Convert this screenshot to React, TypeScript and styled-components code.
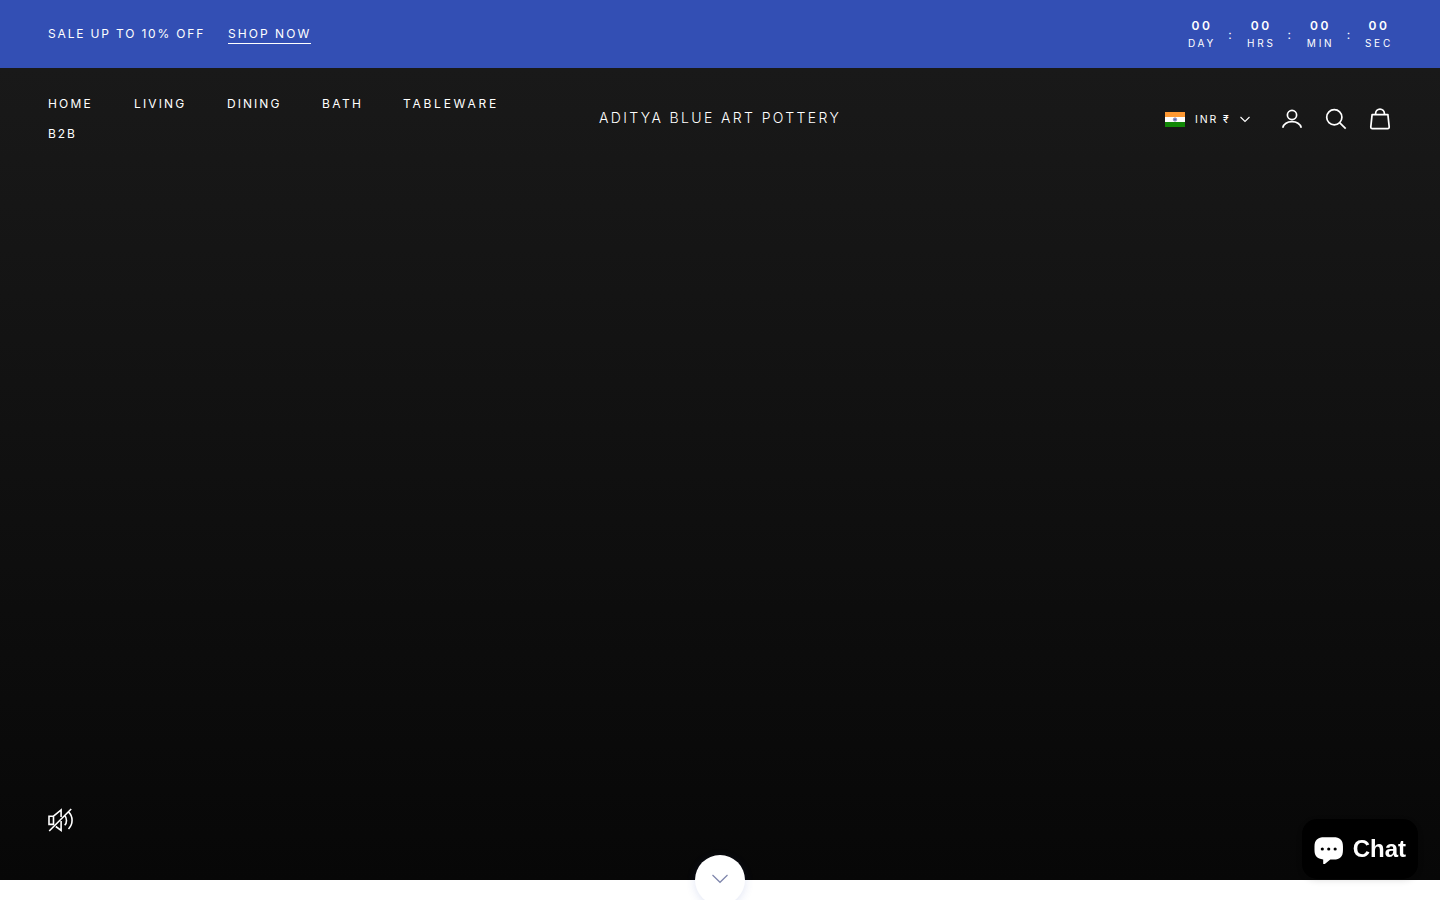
import React from "react";
import styled, { createGlobalStyle } from "styled-components";

const GlobalStyle = createGlobalStyle`
  *, *::before, *::after { box-sizing: border-box; }
  html, body { margin: 0; height: 100%; overflow: hidden; background: #fff; }
  body { font-family: Inter, "Liberation Sans", sans-serif; color: #fff; }
  a { color: inherit; text-decoration: none; }
  svg { display: block; }
`;

const Page = styled.div`
  height: 900px;
  overflow: hidden;
  display: flex;
  flex-direction: column;
`;

const AnnouncementBar = styled.aside`
  flex: none;
  height: 68px;
  padding: 0 48px;
  display: flex;
  align-items: center;
  justify-content: space-between;
  background: #334fb4;
`;

const Offer = styled.div`
  display: flex;
  gap: 24px;
  font-size: 12px;
  font-weight: 380;
  line-height: 20px;
  white-space: nowrap;
`;

const OfferText = styled.span`
  width: 156px;
  letter-spacing: 1.83px;
`;

const OfferLink = styled.a`
  width: 83px;
  height: 20px;
  letter-spacing: 2.05px;
  border-bottom: 1px solid #fff;
`;

const Countdown = styled.div`
  display: flex;
  align-items: center;
  width: 205px;
  justify-content: space-between;
`;

const Unit = styled.div<{ $width: number }>`
  width: ${(p) => p.$width}px;
  display: flex;
  flex-direction: column;
  align-items: center;
  padding-top: 1px;
  white-space: nowrap;
`;

const UnitValue = styled.span`
  font-size: 12px;
  line-height: 18px;
  font-weight: 600;
  letter-spacing: 2.6px;
  margin-right: -1px;
`;

const UnitLabel = styled.span`
  font-size: 10px;
  font-weight: 380;
  line-height: 17px;
  letter-spacing: 2.8px;
  margin-right: -1px;
`;

const Colon = styled.span`
  width: 6px;
  font-size: 12px;
  line-height: 18px;
  padding-top: 1px;
`;

const Hero = styled.main`
  position: relative;
  flex: none;
  height: 812px;
  display: flex;
  flex-direction: column;
  justify-content: space-between;
  background: linear-gradient(#191919, #070707);
`;

const Header = styled.header`
  height: 102px;
  padding: 0 48px;
  display: grid;
  grid-template-columns: 1fr 242px 1fr;
  align-items: center;
`;

const Nav = styled.nav`
  width: 480px;
  display: flex;
  flex-wrap: wrap;
  row-gap: 12px;
  padding-bottom: 1px;
`;

const NavLink = styled.a<{ $width: number; $spacing: number }>`
  width: ${(p) => p.$width}px;
  font-size: 12px;
  font-weight: 370;
  line-height: 18px;
  letter-spacing: ${(p) => p.$spacing}px;
  white-space: nowrap;
`;

const Brand = styled.a`
  font-size: 14px;
  font-weight: 360;
  line-height: 20px;
  letter-spacing: 2.37px;
  white-space: nowrap;
  padding-bottom: 2px;
`;

const Tools = styled.div`
  display: flex;
  justify-content: flex-end;
  align-items: center;
`;

const Currency = styled.button`
  width: 85px;
  margin-right: 30px;
  padding: 0;
  border: 0;
  display: flex;
  align-items: center;
  background: none;
  color: inherit;
  font: 400 10.5px/16px Inter, "Liberation Sans", sans-serif;
  letter-spacing: 1.9px;
  white-space: nowrap;
`;

const CurrencyText = styled.span`
  width: 55px;
  padding: 1px 0 0 10px;
  text-align: left;
`;

const IconRow = styled.div`
  display: flex;
  gap: 20px;
`;

const IconButton = styled.button`
  width: 24px;
  height: 24px;
  padding: 0;
  border: 0;
  background: none;
  color: inherit;
`;

const SoundButton = styled(IconButton)`
  width: 26px;
  height: 26px;
  margin: 0 0 47px 48px;
`;

const ScrollButton = styled.button`
  position: absolute;
  left: 50%;
  bottom: -25px;
  width: 50px;
  height: 50px;
  margin-left: -25px;
  padding: 0 0 2px;
  border: 0;
  border-radius: 50%;
  display: grid;
  place-items: center;
  background: #fff;
  box-shadow: 0 2px 10px rgba(51, 79, 180, 0.15);
`;

const ChatButton = styled.button`
  position: fixed;
  right: 22px;
  bottom: 21px;
  width: 116px;
  height: 60px;
  padding: 0 12px;
  border: 0;
  border-radius: 15px;
  display: flex;
  align-items: center;
  gap: 9px;
  background: #000;
  color: #fff;
  font: 700 24px/28px "Liberation Sans", sans-serif;
  box-shadow: 0 2px 6px rgba(0, 0, 0, 0.1);
`;

const links = [
  { label: "HOME", width: 86, spacing: 2.15 },
  { label: "LIVING", width: 93, spacing: 2.15 },
  { label: "DINING", width: 95, spacing: 2.05 },
  { label: "BATH", width: 81, spacing: 2.4 },
  { label: "TABLEWARE", width: 96, spacing: 2.75 },
  { label: "B2B", width: 40, spacing: 1.9 },
];

const units = [
  { label: "DAY", width: 29 },
  { label: "HRS", width: 29 },
  { label: "MIN", width: 29 },
  { label: "SEC", width: 27 },
];

const Flag = () => (
  <svg width="20" height="15" viewBox="0 0 20 15">
    <path fill="#fff" d="M0 0h20v15H0z" />
    <path fill="#f93" d="M0 0h20v5H0z" />
    <path fill="#128807" d="M0 10h20v5H0z" />
    <circle cx="10" cy="7.5" r="1.7" fill="#9ca0cc" stroke="#4b4f93" strokeWidth=".5" />
    <circle cx="10" cy="7.5" r=".5" fill="#008" />
  </svg>
);

export default function App() {
  return (
    <Page>
      <GlobalStyle />
      <AnnouncementBar>
        <Offer>
          <OfferText>SALE UP TO 10% OFF</OfferText>
          <OfferLink href="#">SHOP NOW</OfferLink>
        </Offer>
        <Countdown>
          {units.map((unit, i) => (
            <React.Fragment key={unit.label}>
              {i > 0 && <Colon>:</Colon>}
              <Unit $width={unit.width}>
                <UnitValue>00</UnitValue>
                <UnitLabel>{unit.label}</UnitLabel>
              </Unit>
            </React.Fragment>
          ))}
        </Countdown>
      </AnnouncementBar>
      <Hero>
        <Header>
          <Nav>
            {links.map((link) => (
              <NavLink key={link.label} href="#" $width={link.width} $spacing={link.spacing}>
                {link.label}
              </NavLink>
            ))}
          </Nav>
          <Brand href="#">ADITYA BLUE ART POTTERY</Brand>
          <Tools>
            <Currency>
              <Flag />
              <CurrencyText>INR ₹</CurrencyText>
              <svg width="10" height="7" viewBox="0 0 10 7" fill="none" stroke="currentColor" strokeWidth="1.1">
                <path d="m.5 1 4.5 4.5L9.5 1" />
              </svg>
            </Currency>
            <IconRow>
              <IconButton aria-label="Account">
                <svg width="24" height="24" viewBox="0 0 24 24" fill="none" stroke="currentColor" strokeWidth="1.7">
                  <circle cx="12" cy="8" r="4.6" />
                  <path d="M2.7 20.8c1.3-4 4.8-6.1 9.3-6.1s8 2.1 9.3 6.1" />
                </svg>
              </IconButton>
              <IconButton aria-label="Search">
                <svg width="24" height="24" viewBox="0 0 24 24" fill="none" stroke="currentColor" strokeWidth="1.7">
                  <circle cx="10.3" cy="10.3" r="7.6" />
                  <path d="m15.8 15.8 5.9 5.9" />
                </svg>
              </IconButton>
              <IconButton aria-label="Cart">
                <svg width="24" height="24" viewBox="0 0 24 24" fill="none" stroke="currentColor" strokeWidth="1.7">
                  <path d="M4.1 7.6h15.8l1.3 12.3c.1 1-.5 1.7-1.5 1.7H4.3c-1 0-1.6-.7-1.5-1.7z" strokeLinejoin="round" />
                  <path d="M7.6 7.4V6.5a4.4 4.4 0 0 1 8.8 0v.9" />
                </svg>
              </IconButton>
            </IconRow>
          </Tools>
        </Header>
        <SoundButton aria-label="Unmute">
          <svg width="26" height="26" viewBox="0 0 26 26" fill="none" stroke="currentColor" strokeWidth="1.6">
            <path d="M1 9.2h4.5v8.200H1zM5.500 9.200 13.100 3v7M13.100 14v9.500l-5.300-4" />
            <path d="M16.700 8.500c2.400 2.500 2.400 7.300 0 9.800M20.500 4.800c4.800 4.500 4.700 12.600 0 17.200M1.200 24 23.200 2" />
          </svg>
        </SoundButton>
        <ScrollButton aria-label="Scroll down">
          <svg width="18" height="10" viewBox="0 0 18 10" fill="none" stroke="#7f86ac" strokeWidth="1.2">
            <path d="m1.5 1 7.5 7.3L16.500 1" />
          </svg>
        </ScrollButton>
      </Hero>
      <ChatButton>
        <svg width="30" height="30" viewBox="0 0 30 30">
          <path fill="#fff" d="M10.5 3h9c6.800 0 9.800 2.600 9.800 9.500v3.500c0 6.900-3 9.700-9.300 9.700h-3.500L10.800 30.300c-.7.600-1.500.2-1.500-.7v-4.100C3.200 25 .5 22.200.5 16v-3.500C.5 5.600 3.700 3 10.500 3z" />
          <circle cx="8.4" cy="15" r="1.6" />
          <circle cx="14.9" cy="15" r="1.6" />
          <circle cx="21.4" cy="15" r="1.6" />
        </svg>
        Chat
      </ChatButton>
    </Page>
  );
}
